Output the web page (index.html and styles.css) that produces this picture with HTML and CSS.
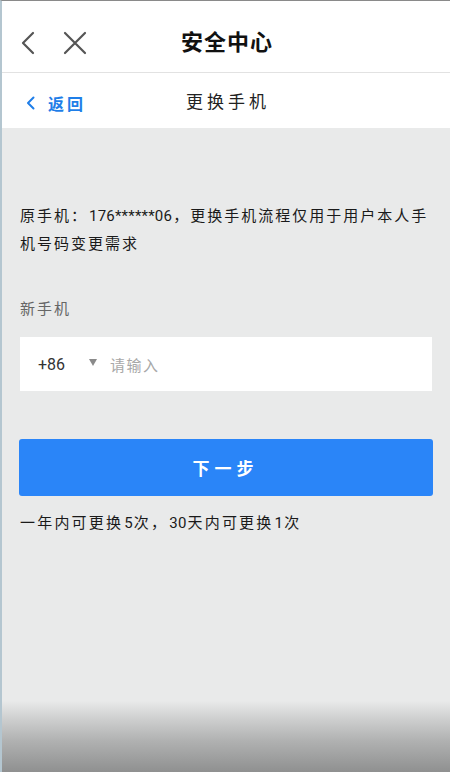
FILE: index.html
```html
<!DOCTYPE html>
<html lang="zh-CN">
<head>
<meta charset="utf-8">
<title>安全中心</title>
<link rel="stylesheet" href="styles.css">
</head>
<body>
<div class="page">
  <header class="topbar">
    <div class="topbar-icons">
      <svg class="icon" width="16" height="24" viewBox="0 0 16 24"><path d="M13 2 L3 12 L13 22" fill="none" stroke="#555" stroke-width="2.2" stroke-linecap="round" stroke-linejoin="round"/></svg>
      <svg class="icon close" width="24" height="24" viewBox="0 0 24 24"><path d="M2 2 L22 22 M22 2 L2 22" fill="none" stroke="#555" stroke-width="2.2" stroke-linecap="round"/></svg>
    </div>
    <h1 class="title">安全中心</h1>
  </header>
  <nav class="subbar">
    <a class="back">
      <svg width="9" height="14" viewBox="0 0 9 14"><path d="M7.5 1.5 L2 7 L7.5 12.5" fill="none" stroke="#1f7ee8" stroke-width="2" stroke-linecap="round" stroke-linejoin="round"/></svg>
      <span>返回</span>
    </a>
    <div class="subtitle">更换手机</div>
  </nav>
  <main class="content">
    <p class="desc">原手机：<span class="num">176******06</span>，更换手机流程仅用于用户本人手机号码变更需求</p>
    <div class="label">新手机</div>
    <div class="input">
      <span class="code">+86</span>
      <span class="tri"></span>
      <span class="placeholder">请输入</span>
    </div>
    <button class="btn">下一步</button>
    <p class="note">一年内可更换<span class="num">5</span>次，<span class="num">30</span>天内可更换<span class="num">1</span>次</p>
  </main>
</div>
</body>
</html>
```

FILE: styles.css
```css
* { box-sizing: border-box; }
html, body { margin: 0; padding: 0; }
body {
  font-family: "Noto Sans CJK SC", "Noto Sans", sans-serif;
  color: #222;
}
.page {
  width: 450px;
  height: 772px;
  display: flex;
  flex-direction: column;
  border-top: 1px solid #8a8a8a;
  border-left: 2px solid #b4c6d0;
  background: linear-gradient(to bottom, #e9eaea 0, #e9eaea 700px, #d2d3d3 715px, #b0b1b1 740px, #8e8f8f 772px);
}
.topbar {
  position: relative;
  height: 72px;
  background: #fff;
  border-bottom: 1px solid #e2e2e2;
  display: flex;
  align-items: center;
  justify-content: center;
}
.topbar-icons {
  position: absolute;
  left: 18px;
  top: 30px;
  display: flex;
  align-items: center;
  gap: 27px;
}
.title {
  margin: 0;
  font-size: 22px;
  font-weight: 700;
  color: #111;
  letter-spacing: 1px;
  padding-left: 2px;
  padding-top: 7px;
}
.subbar {
  position: relative;
  height: 55px;
  background: #fff;
  display: flex;
  align-items: center;
  justify-content: center;
}
.back {
  position: absolute;
  left: 24px;
  top: 18px;
  display: flex;
  align-items: center;
  gap: 13px;
  color: #1f7ee8;
  font-size: 16px;
  font-weight: 700;
  letter-spacing: 3px;
}
.subtitle {
  font-size: 17px;
  letter-spacing: 4px;
  color: #222;
  padding-left: 4px;
}
.content {
  padding: 0 18px 0 18px;
}
.desc {
  margin: 73px 0 0;
  font-size: 15px;
  line-height: 28px;
  letter-spacing: 2px;
  color: #1a1a1a;
}
.num {
  display: inline-block;
  font-family: "Roboto", "Noto Sans", sans-serif;
  letter-spacing: 0.2px;
  line-height: 1;
  padding: 0 1px;
}
.label {
  margin-top: 41px;
  font-size: 15px;
  line-height: 20px;
  letter-spacing: 2px;
  color: #666;
}
.input {
  margin-top: 19px;
  height: 54px;
  background: #fff;
  display: flex;
  align-items: center;
  padding-left: 18px;
  width: 412px;
}
.code {
  font-family: "Roboto", "Noto Sans", sans-serif;
  font-size: 16px;
  color: #333;
}
.tri {
  margin-left: 24px;
  width: 0;
  height: 0;
  border-left: 4px solid transparent;
  border-right: 4px solid transparent;
  border-top: 7px solid #8a8a8a;
  margin-top: -4px;
}
.placeholder {
  margin-left: 13px;
  font-size: 15px;
  letter-spacing: 1.5px;
  color: #a8a8a8;
}
.btn {
  display: block;
  margin-top: 48px;
  width: 414px;
  height: 57px;
  margin-left: -1px;
  border: none;
  border-radius: 3px;
  background: #2a85f8;
  color: #fff;
  font-family: "Noto Sans CJK SC", sans-serif;
  font-size: 17px;
  font-weight: 700;
  letter-spacing: 5px;
  padding-left: 5px;
}
.note {
  margin: 16px 0 0;
  font-size: 15px;
  line-height: 20px;
  letter-spacing: 2.2px;
  color: #1a1a1a;
}
```
